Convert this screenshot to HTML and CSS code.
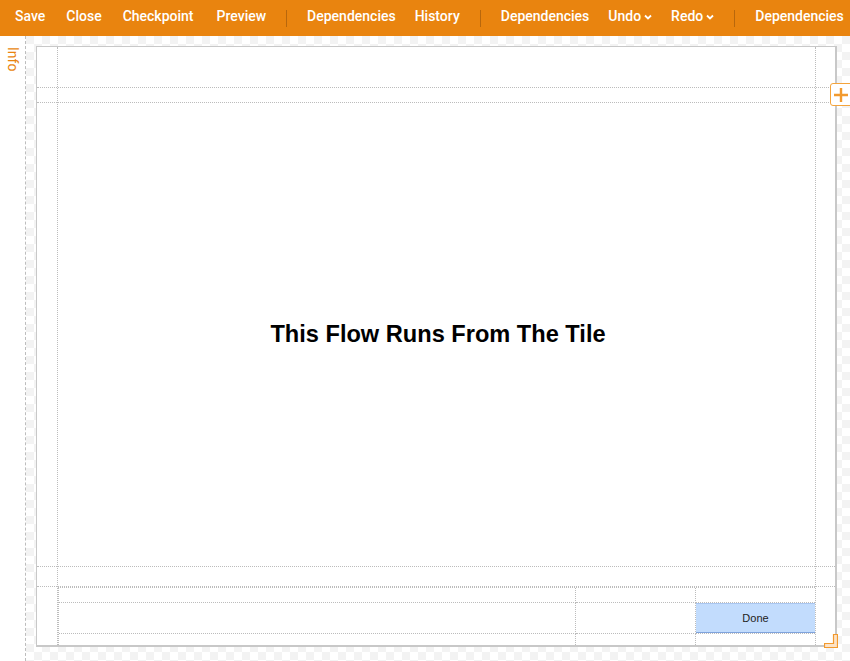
FILE: index.html
```html
<!DOCTYPE html>
<html>
<head>
<meta charset="utf-8">
<link rel="stylesheet" href="styles.css">
</head>
<body>
<div class="toolbar">
  <span class="tb-item">Save</span>
  <span class="tb-item m2">Close</span>
  <span class="tb-item m2">Checkpoint</span>
  <span class="tb-item m4">Preview</span>
  <span class="tb-sep"></span>
  <span class="tb-item">Dependencies</span>
  <span class="tb-item">History</span>
  <span class="tb-sep"></span>
  <span class="tb-item">Dependencies</span>
  <span class="tb-item">Undo<svg class="chev" width="8" height="6" viewBox="0 0 8 6"><polyline points="1,1.5 4,4.5 7,1.5" fill="none" stroke="#fff" stroke-width="1.8"/></svg></span>
  <span class="tb-item">Redo<svg class="chev" width="8" height="6" viewBox="0 0 8 6"><polyline points="1,1.5 4,4.5 7,1.5" fill="none" stroke="#fff" stroke-width="1.8"/></svg></span>
  <span class="tb-sep"></span>
  <span class="tb-item">Dependencies</span>
</div>
<div class="main">
  <div class="side"><span class="info">Info</span></div>
  <div class="stage">
    <div class="canvas">
      <div class="hrow r2"></div>
      <div class="hrow r3"></div>
      <div class="hrow r4"></div>
      <div class="hrow r5"></div>
      <div class="vcol"></div>
      <div class="title">This Flow Runs From The Tile</div>
      <div class="footer">
        <div class="fc"></div><div class="fc"></div><div class="fc last"></div>
        <div class="fc"></div><div class="fc"></div><div class="fc last"><button class="done">Done</button></div>
        <div class="fc bottom"></div><div class="fc bottom"></div><div class="fc last bottom"></div>
      </div>
    </div>
    <div class="plus"><svg width="16" height="16" viewBox="0 0 16 16"><path d="M8 1v14M1 8h14" stroke="#f29a2e" stroke-width="2.4" fill="none"/></svg></div>
    <svg class="resize" width="14" height="14" viewBox="0 0 14 14"><path d="M9.5 0.5h4v13h-13v-4h9z" fill="#fde3c6" stroke="#f29a2e" stroke-width="1.2"/></svg>
  </div>
</div>
</body>
</html>
```
FILE: styles.css
```css
html, body {
  margin: 0;
  padding: 0;
  background: #fff;
  overflow: hidden;
}
body {
  width: 850px;
  height: 661px;
  font-family: Roboto, "Liberation Sans", sans-serif;
}
.toolbar {
  height: 36px;
  background: #e9840f;
  display: flex;
  align-items: center;
  gap: 19px;
  padding-left: 15px;
  padding-bottom: 4px;
  box-sizing: border-box;
  white-space: nowrap;
  overflow: hidden;
}
.tb-item {
  color: #fff;
  font-size: 14px;
  font-weight: 500;
  display: flex;
  align-items: center;
  line-height: 16px;
}
.tb-item.m2 {
  margin-left: 2px;
}
.tb-item.m4 {
  margin-left: 4px;
}
.chev {
  margin-left: 3px;
  margin-top: 2px;
}
.tb-sep {
  width: 1px;
  height: 17px;
  margin: 4px 1px 0;
  background: #b8670c;
  flex: none;
}
.main {
  display: flex;
  height: 625px;
}
.side {
  width: 25px;
  flex: none;
  border-right: 1px dashed #bdbdbd;
  background: #fff;
  display: flex;
  justify-content: center;
  padding-top: 11px;
  box-sizing: content-box;
}
.info {
  writing-mode: vertical-rl;
  color: #e9840f;
  font-size: 14px;
  line-height: 14px;
  height: 27px;
  margin-left: 1px;
}
.stage {
  flex: 1;
  position: relative;
  background: conic-gradient(#fff 25%, #f3f3f3 0 50%, #fff 0 75%, #f3f3f3 0) 0 0 / 16px 16px;
  padding: 10px 0 0 10px;
}
.canvas {
  width: 798px;
  height: 598px;
  background: #fff;
  border: 1px solid #c8c8c8;
  border-right-width: 2px;
  border-bottom-width: 2px;
  display: grid;
  grid-template-columns: 20px 759px 19px;
  grid-template-rows: 40px 15px 464px 20px 59px;
}
.hrow {
  grid-column: 1 / -1;
  border-top: 1px dotted #bcbcbc;
}
.r2 { grid-row: 2; }
.r3 { grid-row: 3; }
.r4 { grid-row: 4; }
.r5 { grid-row: 5; }
.vcol {
  grid-column: 2;
  grid-row: 1 / -1;
  border-left: 1px dotted #bcbcbc;
  border-right: 1px dotted #bcbcbc;
}
.title {
  grid-column: 2;
  grid-row: 3;
  display: flex;
  align-items: center;
  justify-content: center;
  font-family: "Liberation Sans", Arial, sans-serif;
  font-weight: bold;
  font-size: 23.6px;
  color: #000;
  padding-left: 3px;
  padding-top: 1px;
}
.footer {
  grid-column: 2;
  grid-row: 5;
  margin: 1px 1px 0 1px;
  border-top: 1px dotted #bcbcbc;
  border-left: 1px dotted #bcbcbc;
  display: grid;
  grid-template-columns: 517px 120px 1fr;
  grid-template-rows: 15px 31px 1fr;
}
.fc {
  border-right: 1px dotted #bcbcbc;
  border-bottom: 1px dotted #bcbcbc;
  display: flex;
}
.fc.last { border-right: none; }
.fc.bottom { border-bottom: none; }
.done {
  flex: 1;
  margin: 0;
  padding: 0;
  background: #c2dcfd;
  border: none;
  border-top: 1px solid #a9c6f0;
  border-bottom: 1px solid #7fa3dc;
  font-family: "Liberation Sans", Arial, sans-serif;
  font-size: 11px;
  color: #222;
}
.plus {
  position: absolute;
  left: 804px;
  top: 47px;
  width: 26px;
  height: 21px;
  border: 1px solid #f4a43c;
  border-radius: 3px 0 0 3px;
  background: #fff;
  display: flex;
  align-items: center;
  padding-left: 2px;
  box-sizing: content-box;
}
.resize {
  position: absolute;
  left: 798px;
  top: 598px;
}
```
